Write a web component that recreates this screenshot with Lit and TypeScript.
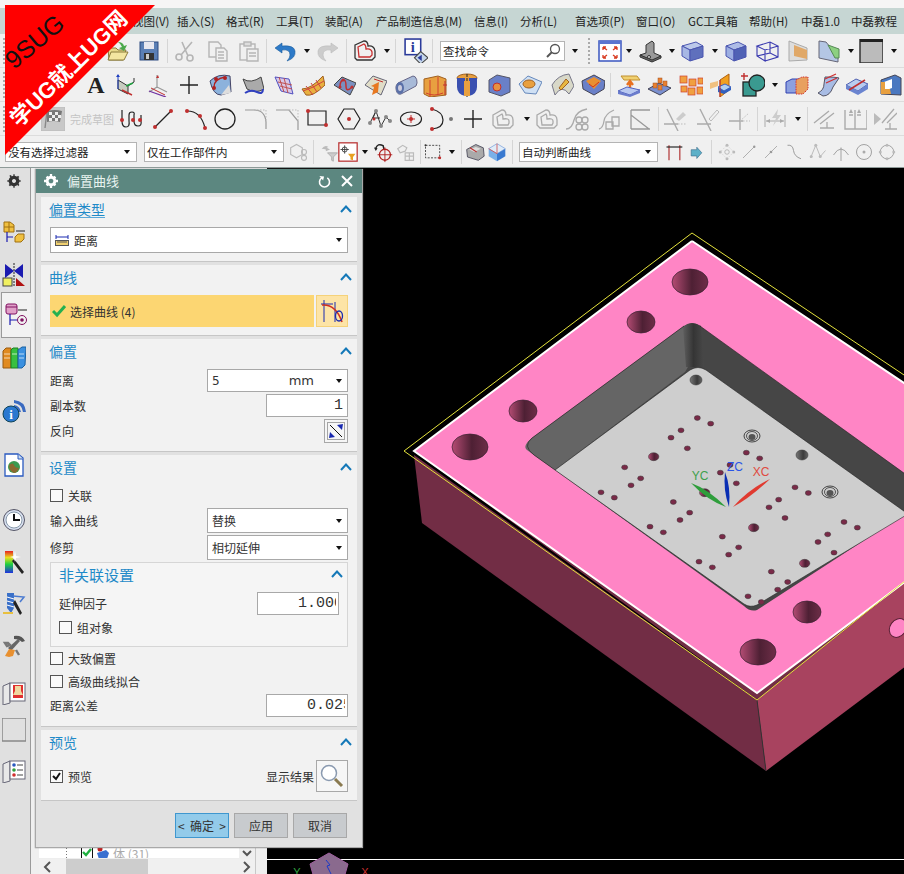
import { LitElement, css, html, svg } from "lit";
import { customElement } from "lit/decorators.js";

// toolbar / side strip icons, all on a 24x24 box
const ICONS: Record<string, unknown> = {
  folder: svg`<path d="M2 9h8l2 2h8l-3 10H3z" fill="#e8d98a" stroke="#8a7a3a"/><path d="M2 21l3-8h17l-4 8z" fill="#f3e6a0" stroke="#8a7a3a"/><path d="M12 3q5 0 6 4l3-1-3 6-5-3 3-1q-1-3-4-5z" fill="#4aa84a"/>`,
  save: svg`<rect x="3" y="3" width="18" height="18" fill="#5b7fb5" stroke="#2c4a80"/><rect x="7" y="3" width="10" height="7" fill="#e8e8f0"/><rect x="7" y="14" width="10" height="7" fill="#333"/><rect x="9" y="15" width="3" height="5" fill="#ccc"/>`,
  cut: svg`<g fill="none" stroke="#b5b5b5" stroke-width="1.6"><circle cx="6" cy="18" r="3"/><circle cx="17" cy="19" r="3"/><path d="M8 16L19 3M15 17L9 3"/></g>`,
  copy: svg`<g fill="#f0f0f0" stroke="#b5b5b5" stroke-width="1.4"><path d="M3 3h9l3 3v12H3z"/><path d="M10 9h8l3 3v10H10z"/><path d="M12 13h6M12 16h6M12 19h6"/></g>`,
  paste: svg`<g fill="#f0f0f0" stroke="#b5b5b5" stroke-width="1.4"><rect x="3" y="5" width="15" height="16"/><rect x="7" y="3" width="7" height="4" fill="#ddd"/><path d="M10 10h11v12H10z"/><path d="M12 14h7M12 17h7"/></g>`,
  undo: svg`<path d="M9 4L2 9l7 5v-3q8-1 8 5 0 3-3 6 9-3 8-10-1-6-13-5z" fill="#2d7ac8" stroke="#1a5a9a" stroke-width=".6"/>`,
  redo: svg`<path d="M15 4l7 5-7 5v-3q-8-1-8 5 0 3 3 6-9-3-8-10 1-6 13-5z" fill="#ccc" stroke="#bbb" stroke-width=".6"/>`,
  heart: svg`<path d="M2 6l9-4q4 0 4 5 6-1 7 5v6l-3 3H4l-2-2z" fill="none" stroke="#333" stroke-width="1.3"/><path d="M5 8l6-3q2 1 2 5 5-1 6 3v3l-2 2H6z" fill="none" stroke="#c83030" stroke-width="1.3"/>`,
  info: svg`<rect x="2" y="1" width="15" height="15" fill="#fff" stroke="#2a3a9a" stroke-width="1.5"/><text x="9.5" y="13" text-anchor="middle" font-family="Liberation Serif" font-weight="700" font-size="14" fill="#2a3a9a">i</text><path d="M17 13l7 6-7 6-6-6z" fill="#c5d6ea" stroke="#444"/><path d="M14 19l4-3v6z" fill="#2a3a9a"/>`,
  fit: svg`<rect x="1" y="2" width="22" height="20" fill="#fff" stroke="#3a55c0" stroke-width="1.5"/><rect x="1" y="2" width="22" height="3" fill="#5a75d0"/><path d="M5 8l4 3M5 8v3M5 8h3M19 8l-4 3M19 8v3M19 8h-3M5 19l4-3M5 19v-3M5 19h3M19 19l-4-3M19 19v-3M19 19h-3" stroke="#d83a20" stroke-width="1.3" fill="none"/>`,
  machine: svg`<path d="M2 16l6-2V6l6-4 2 2v10l7 3-9 5z" fill="#999" stroke="#333"/><path d="M2 16l12 5 9-4v2l-9 4-12-5z" fill="#666" stroke="#333"/><circle cx="11" cy="18" r="1.5" fill="#ddd" stroke="#333"/>`,
  cube: svg`<path d="M2 7l14-4 7 4-13 4z" fill="#bcc9ea" stroke="#4a55b0"/><path d="M2 7l8 4v11l-8-5z" fill="#a7b7e4" stroke="#4a55b0"/><path d="M10 11l13-4v11l-13 4z" fill="#5f70bd" stroke="#4a55b0"/>`,
  cube2: svg`<path d="M2 7l12-4 8 4-12 4z" fill="#aebce6" stroke="#4a55b0"/><path d="M2 7l8 4v11l-8-5z" fill="#9dafe2" stroke="#4a55b0"/><path d="M10 11l12-4v11l-12 4z" fill="#5062b5" stroke="#4a55b0"/>`,
  wire: svg`<g fill="none" stroke="#3a3ab0" stroke-width="1.1"><path d="M2 7l13-4 8 4-13 4zM2 7v10l8 5V11M10 22l13-4V7M15 3v11l8 4M15 14L2 17"/></g>`,
  section: svg`<path d="M4 2l5 2 13 5v12L4 22z" fill="#ddd" stroke="#aaa"/><path d="M9 6l13 5v9L9 17z" fill="#e0a868"/>`,
  section2: svg`<path d="M2 2l7 1 12 15v5L2 19z" fill="#b4c6e4" stroke="#667"/><path d="M11 6l11 4v9l-4 0z" fill="#8cd080" stroke="#585"/>`,
  square: svg`<rect x="1" y="0" width="23" height="24" fill="#bbb" stroke="#333" stroke-width="1.5"/><rect x="1" y="0" width="23" height="3" fill="#222"/>`,
  letterA: svg`<text x="12" y="20" text-anchor="middle" font-family="Liberation Serif" font-weight="700" font-size="24" fill="#222">A</text>`,
  axis: svg`<path d="M5 7l10 6v8L5 16z" fill="#c8ccc0" stroke="#333"/><path d="M15 13l6-4v-4" fill="none" stroke="#333"/><path d="M5 2v14" stroke="#2040c0"/><path d="M3 4l2-3 2 3z" fill="#2040c0"/><path d="M13 13l7-3" stroke="#20a040" stroke-width="1.5"/><path d="M9 17l10 5" stroke="#c03030" stroke-width="1.5"/>`,
  csys: svg`<path d="M11 2v13M11 14l10 5M11 14L3 19" fill="none" stroke="#999" stroke-width="1.2"/><path d="M10 5l2-3 1 3z" fill="#c03030"/><path d="M3 18l17 6" stroke="#7030a0" stroke-width="1.3"/><path d="M5 15l14 7" stroke="#c03030"/>`,
  plus: svg`<path d="M12 3v18M3 12h18" stroke="#222" stroke-width="1.4"/>`,
  surf1: svg`<path d="M2 8q8-8 20-5l1 16-10 3Q5 22 2 8z" fill="#8cb2dc" stroke="#446"/><path d="M6 14q0-8 11-10" fill="none" stroke="#b02020" stroke-width="1.4"/><circle cx="6" cy="15" r="2" fill="#b02020"/><circle cx="17" cy="5" r="2" fill="#b02020"/><circle cx="8" cy="6" r="2" fill="#b02020"/><path d="M13 22l8-10 2 8z" fill="#ddd"/>`,
  surf2: svg`<path d="M3 6q8 5 18-2l3 12q-8 5-17 0z" fill="#aaa" stroke="#444"/><path d="M5 20q6-4 12-1t6-3" stroke="#3040c0" fill="none" stroke-width="2"/>`,
  mesh: svg`<path d="M4 4l14 2 4 15-12-3z" fill="#d8c8e8" stroke="#5050c0"/><path d="M7 9l14 3M9 13l12 3M8 4l5 15M13 5l4 15" stroke="#c05050" fill="none"/>`,
  mesh2: svg`<path d="M1 16Q10 16 22 3l2 9Q12 24 5 22z" fill="#e8b040" stroke="#a06020"/><path d="M5 13l7 9M10 10l6 9M15 7l5 8M2 18Q12 15 23 8" stroke="#d04040" fill="none"/>`,
  patch: svg`<path d="M2 12L10 4l14 6-6 12z" fill="#7a90c0" stroke="#444"/><path d="M8 14q0-6 3-7t3 6 6 1" stroke="#c03030" fill="none" stroke-width="1.5"/><circle cx="8" cy="14" r="1.5" fill="#c03030"/><circle cx="11" cy="7" r="1.5" fill="#c03030"/><circle cx="20" cy="14" r="1.5" fill="#c03030"/>`,
  patch2: svg`<path d="M2 12L10 3l14 5-6 14z" fill="#e0ddc8" stroke="#667"/><path d="M9 22l2-8-3-1 8-4-1 10z" fill="#e87820"/><path d="M11 6l9 3" stroke="#c03030"/>`,
  cylinder: svg`<path d="M4 10l15-7a4 6 0 0 1 3 10L7 21a4 6 0 0 1-3-11z" fill="#a8bad8" stroke="#668"/><ellipse cx="6" cy="15" rx="4" ry="6" fill="#5a70a8"/><ellipse cx="6" cy="15" rx="2" ry="3" fill="#ccd"/>`,
  orange: svg`<path d="M1 6l14-3 8 3v16l-16 2-6-3z" fill="#e8a040" stroke="#a06020"/><path d="M7 7v17M15 4v18M3 20q8 4 17 0" stroke="#d04030" fill="none"/><path d="M22 8v14M20 12h4" stroke="#c03030"/>`,
  hole: svg`<ellipse cx="12" cy="5" rx="10" ry="4" fill="#e8a040" stroke="#a06020"/><path d="M2 5h8v18q-8-2-8-9zM14 23V5h8v9q0 7-8 9z" fill="#3a50b0"/><path d="M12 1v23" stroke="#222" stroke-dasharray="3 1"/><path d="M9 8h6v15H9z" fill="#e8a040"/>`,
  boxhole: svg`<path d="M2 7l8-5 13 3v14l-9 4-12-4z" fill="#6a80c8" stroke="#556"/><circle cx="10" cy="14" r="4" fill="#e89040" stroke="#c03030"/>`,
  pad: svg`<path d="M1 11l9-8 14 6-6 12-11-1z" fill="#cfe0f4" stroke="#6688bb"/><ellipse cx="11" cy="11" rx="6" ry="4" fill="#e8a040" stroke="#a06020"/>`,
  rib: svg`<path d="M2 12Q8 2 19 1l5 12-5 8q-7-10-14 1z" fill="#d8d8c8" stroke="#778"/><path d="M9 15l7-9 3 3-8 8z" fill="#e8b840" stroke="#a06020"/>`,
  tray: svg`<path d="M1 8l12-6 11 6-1 8-10 6-11-6z" fill="#6a80c8" stroke="#445"/><path d="M5 8l8-4 7 4-7 8z" fill="#e89030"/><path d="M8 11l4 3 6-5" stroke="#d03020" fill="none"/>`,
  extrude: svg`<path d="M4 3h16l3 4H7z" fill="#f0d070" stroke="#c09030"/><path d="M13 18V9M10 12l3-4 3 4" stroke="#e87020" stroke-width="2.4" fill="none"/><path d="M1 18l9-4 13 3-10 5z" fill="#b8c8f0" stroke="#5060c0"/><path d="M1 18v3l12 3v-2zM13 24l10-4v-3l-10 5z" fill="#6a7ccc"/>`,
  pins: svg`<path d="M1 16l11-6 12 5-11 7z" fill="#7a90d0" stroke="#445"/><g fill="#e88030" stroke="#a05020" stroke-width=".5"><rect x="6" y="10" width="4" height="5"/><rect x="11" y="5" width="4" height="5"/><rect x="16" y="8" width="4" height="5"/><rect x="11" y="12" width="4" height="5"/></g>`,
  boxes: svg`<g fill="#f0a040" stroke="#d04030" stroke-width=".7"><rect x="1" y="3" width="7" height="7"/><rect x="10" y="6" width="7" height="7"/><rect x="19" y="5" width="5" height="6"/><rect x="2" y="13" width="6" height="6"/><rect x="9" y="15" width="7" height="7"/><rect x="18" y="14" width="6" height="7"/></g>`,
  split: svg`<path d="M12 7L21 1v16l-9 7z" fill="#f0a020" stroke="#b06010"/><path d="M2 10l8-2v5l-8 3z" fill="#f0c080"/><path d="M10 14l7-3 6 3-7 4z" fill="#b0d0f0" stroke="#4060c0"/><path d="M10 14v5l6 2v-3zM16 21l7-4v-3l-7 4z" fill="#3060c0"/><path d="M12 7v17" stroke="#c03030"/>`,
  boolean: svg`<path d="M3 0v7M0 3h7" stroke="#c03030" stroke-width="1.4"/><rect x="2" y="9" width="13" height="14" fill="#3a9a90" stroke="#222" stroke-width="1.3"/><circle cx="16" cy="10" r="8" fill="#3a9a90" stroke="#222" stroke-width="1.3"/>`,
  cubes2: svg`<path d="M1 9l6-3h8v14H1z" fill="#8ca0e0" stroke="#3040b0"/><path d="M11 7l6-3h6v12l-5 5h-7z" fill="#e8a060" stroke="#d03030" stroke-dasharray="1.5 1"/>`,
  trim: svg`<path d="M9 4q11 0 14 1l-6 9q-3 9-10 9l-5-3q6-3 6-9z" fill="#a8bce4" stroke="#556"/><path d="M9 6l11-5M10 10l11-5" stroke="#d03030" stroke-width="1.3"/>`,
  slab: svg`<path d="M1 12l10-6 12 5-10 7z" fill="#b8ccf0" stroke="#5060b0"/><path d="M1 12v4l12 6v-4zM13 22l10-6v-5l-10 7z" fill="#6a84d0"/><path d="M4 17l16-10" stroke="#c03030" stroke-width="1.6"/>`,
  frame: svg`<path d="M3 7l14-5 6 3v17L3 21z" fill="#4a78c0" stroke="#445"/><path d="M6 9l8-3v9l-8 3z" fill="#fff"/><path d="M3 9v12h10l-1-5H7V9z" fill="#e8a040"/>`,
  flag: svg`<rect x="0" y="0" width="24" height="24" fill="#c8c8c8" stroke="#bbb"/><path d="M6 4q8-2 15 0l-2 11q-6-2-13 0z" fill="#777"/><path d="M8 5h3v3H8zM14 5h3v3h-3zM11 8h3v3h-3zM17 8h3v3h-3zM8 11h3v3H8zM14 11h3v3h-3z" fill="#eee"/><path d="M6 4L4 21" stroke="#888" stroke-width="1.4"/>`,
  profile: svg`<path d="M3 3v11q0 6 4 6t3-6V8q0-3 3-3t2 3v6q0 5 4 5t3-5V8" fill="none" stroke="#222" stroke-width="1.2"/><g fill="#c03030"><circle cx="3" cy="13" r="2"/><circle cx="14" cy="13" r="2"/><circle cx="21" cy="13" r="2"/></g>`,
  line: svg`<path d="M4 20L20 4" stroke="#222" stroke-width="1.2"/><g fill="#c03030"><circle cx="4" cy="20" r="2"/><circle cx="20" cy="4" r="2"/></g>`,
  arc: svg`<path d="M4 4q14 0 18 17" fill="none" stroke="#222" stroke-width="1.2"/><g fill="#c03030"><circle cx="4" cy="4" r="2"/><circle cx="17" cy="9" r="2"/><circle cx="22" cy="21" r="2"/></g>`,
  circle: svg`<circle cx="12" cy="12" r="10" fill="none" stroke="#222" stroke-width="1.3"/>`,
  fillet: svg`<path d="M1 3h9q11 0 12 12v7" fill="none" stroke="#999" stroke-width="1.2"/><path d="M10 3h12v12" fill="none" stroke="#bbb" stroke-dasharray="1.5 1.5"/>`,
  chamfer: svg`<path d="M1 3h13l9 11v9" fill="none" stroke="#999" stroke-width="1.2"/><path d="M14 3h9v11" fill="none" stroke="#bbb" stroke-dasharray="1.5 1.5"/>`,
  rect: svg`<path d="M2 4h18v14H2z" fill="none" stroke="#222" stroke-width="1.2"/><g fill="#c03030"><circle cx="2" cy="4" r="2"/><circle cx="20" cy="18" r="2"/></g>`,
  polygon: svg`<path d="M7 2h10l6 10-6 10H7L1 12z" fill="none" stroke="#222" stroke-width="1.2"/><circle cx="12" cy="12" r="2" fill="#c03030"/>`,
  spline: svg`<path d="M2 16L8 4l5 15 5-9 4 4" fill="none" stroke="#333" stroke-width="1"/><path d="M8 4l-3 7h7" fill="none" stroke="#333"/><g fill="#888"><circle cx="2" cy="16" r="2"/><circle cx="8" cy="4" r="2"/><circle cx="13" cy="19" r="2"/><circle cx="18" cy="10" r="2"/><circle cx="22" cy="14" r="2"/></g><circle cx="6" cy="12" r="1.5" fill="#c03030"/>`,
  ellipse: svg`<ellipse cx="12" cy="12" rx="10.5" ry="7" fill="none" stroke="#222" stroke-width="1.2"/><path d="M12 8v8M8 12h8" stroke="#c03030"/><circle cx="12" cy="12" r="2" fill="#c03030"/>`,
  conic: svg`<path d="M3 2q11 3 11 11T3 22" fill="none" stroke="#222" stroke-width="1.2"/><g><circle cx="3" cy="2" r="2" fill="#c03030"/><circle cx="3" cy="22" r="2" fill="#c03030"/><circle cx="22" cy="12" r="2" fill="#777"/></g>`,
  offset: svg`<g fill="none" stroke="#aaa" stroke-width="1.3"><path d="M2 8l9-5q4 0 4 5 7-1 7 5v5l-3 3H5l-3-3z"/><path d="M6 10l5-3q1 1 1 5 6-1 6 2v2l-1 2H7z"/></g>`,
  curveset: svg`<g fill="none" stroke="#aaa" stroke-width="1.3"><path d="M1 22q6 0 8-9t13-11"/><circle cx="14" cy="13" r="3"/><circle cx="20" cy="13" r="3"/><circle cx="14" cy="20" r="3"/><circle cx="20" cy="20" r="3"/></g>`,
  mirror: svg`<g fill="none" stroke="#aaa" stroke-width="1.3"><path d="M1 22q4-1 5-8t10-11"/><path d="M8 15h7v7H8zM14 10h7v9h-7z"/></g>`,
  trimc: svg`<g fill="none" stroke="#999" stroke-width="1.3"><path d="M3 3h19M3 22h19M3 3v19M3 8l18 14"/></g>`,
  ex1: svg`<path d="M4 2l11 22M1 17h14" stroke="#aaa" stroke-width="1.4" fill="none"/><path d="M15 17h8" stroke="#bbb" stroke-dasharray="1.5 1.5"/><path d="M13 12l7-7 3 3-7 6z" fill="#ccc"/>`,
  ex2: svg`<path d="M4 2l11 22M1 17h14" stroke="#aaa" stroke-width="1.4" fill="none"/><path d="M13 12l8-9 2 2-8 9z" fill="none" stroke="#bbb"/>`,
  ex3: svg`<path d="M2 14h14M13 23V2" stroke="#aaa" stroke-width="1.4" fill="none"/><path d="M13 14l9-8M13 14h10" stroke="#bbb" stroke-dasharray="1.5 1.5"/>`,
  dim: svg`<path d="M2 8v12M22 8v12M3 14h18" stroke="#aaa" fill="none"/><path d="M3 14l4-2v4zM21 14l-4-2v4z" fill="#aaa"/><path d="M15 2l-6 9h4l-3 8 8-11h-4z" fill="#ccc"/>`,
  cons1: svg`<path d="M2 16L17 4M8 17L22 6M8 21h14M15 15v6" stroke="#aaa" stroke-width="1.3" fill="none"/>`,
  cons2: svg`<path d="M2 3v19h22V3M12 3v19M6 8h4M14 8h4" stroke="#aaa" stroke-width="1.4" fill="none"/><path d="M8 2l2 4H6zM16 2l2 4h-4z" fill="#aaa"/>`,
  cons3: svg`<path d="M1 6l7 6-7 6z" fill="#bbb"/><path d="M9 16L21 2M14 16L24 6M12 22h12M17 16v6" stroke="#aaa" stroke-width="1.3" fill="none"/>`,
  lock: svg`<g fill="none" stroke="#bbb" stroke-width="1.4"><path d="M2 7l7-4 7 4v8l-7 4-7-4z"/><circle cx="18" cy="12" r="3"/><circle cx="18" cy="19" r="3"/></g>`,
  funnel: svg`<path d="M2 8q4-5 8-2l-2 1 4 2-5 2v-2Q5 8 2 8z" fill="#bbb"/><path d="M9 13h12l-5 5v5l-2-1v-4z" fill="#ccc" stroke="#aaa"/>`,
  filterbox: svg`<rect x="1" y="1" width="22" height="22" fill="#fff" stroke="#b83030" stroke-width="1.5"/><circle cx="8" cy="9" r="3" fill="none" stroke="#333"/><path d="M8 4v10M3 9h10" stroke="#333"/><path d="M12 14h9l-3 4v4l-3-1v-3z" fill="#e8a020"/>`,
  target: svg`<path d="M3 8q2-6 8-3l1 4" fill="none" stroke="#222" stroke-width="1.6"/><path d="M1 7l4 1-2 3z" fill="#222"/><circle cx="13" cy="15" r="6" fill="none" stroke="#b02020" stroke-width="1.4"/><path d="M13 7v16M5 15h16" stroke="#b02020"/>`,
  gears: svg`<g fill="none" stroke="#bbb" stroke-width="1.4"><path d="M2 8l6-4 5 3-2 4-6 2z"/><path d="M11 13h10v9H11zM16 13v9M11 17h10"/></g>`,
  dashrect: svg`<rect x="3" y="4" width="17" height="15" fill="none" stroke="#333" stroke-dasharray="2.4 1.6"/><circle cx="20" cy="19" r="1.8" fill="#c03030"/><circle cx="3" cy="4" r="1.2" fill="#333"/>`,
  cam: svg`<path d="M2 9l11-6 9 4 1 10-7 5-13-4z" fill="#aaa" stroke="#445"/><path d="M5 9l8-3 6 2-8 4z" fill="#ddd"/><path d="M6 7l8 5" stroke="#c03030" stroke-width="1.3"/>`,
  cube3: svg`<path d="M2 8l10-6 10 6-10 6z" fill="#e0ecf8" stroke="#88aadd"/><path d="M2 8l10 6v9L2 17z" fill="#7ab0e8"/><path d="M12 14l10-6v9l-10 6z" fill="#3a7ad0"/><path d="M12 2v12M2 8l10 6" stroke="#d05050"/>`,
  hbar: svg`<path d="M6 4v18M19 4v18" stroke="#b03030" stroke-width="1.4"/><path d="M3 6h19" stroke="#222" stroke-width="1.4"/>`,
  arrow: svg`<path d="M4 7h9V3l8 9-8 9v-4H4z" transform="translate(2 4) scale(.75)" fill="#5cb0c8" stroke="#3a6a8a"/>`,
  snap1: svg`<path d="M12 3l9 9-9 9-9-9z" fill="none" stroke="#ccc" stroke-dasharray="2 2"/><g fill="#bbb"><circle cx="12" cy="3" r="2"/><circle cx="21" cy="12" r="2"/><circle cx="3" cy="12" r="2"/><circle cx="12" cy="21" r="2"/></g><circle cx="12" cy="12" r="3" fill="none" stroke="#aaa"/>`,
  snap2: svg`<path d="M4 20L20 4" stroke="#999"/><circle cx="19" cy="5" r="1.6" fill="#999"/>`,
  snap3: svg`<path d="M4 20L20 4" stroke="#999"/><circle cx="12" cy="12" r="1.8" fill="#999"/>`,
  snap4: svg`<path d="M2 3q7-1 8 7t10 11" fill="none" stroke="#999" stroke-width="1.3"/>`,
  snap5: svg`<path d="M2 20L9 3l6 15 7-8" fill="none" stroke="#aaa"/><g fill="#bbb"><circle cx="9" cy="3" r="2"/><circle cx="15" cy="18" r="2"/><circle cx="3" cy="18" r="2"/></g>`,
  snap6: svg`<path d="M12 6v18M2 16q10-16 20 0" fill="none" stroke="#999" stroke-width="1.2"/>`,
  snap7: svg`<circle cx="12" cy="12" r="10" fill="none" stroke="#999" stroke-width="1.2"/><circle cx="12" cy="12" r="2" fill="#aaa"/>`,
  snap8: svg`<circle cx="12" cy="12" r="9" fill="none" stroke="#999" stroke-width="1.2"/><g fill="#bbb"><circle cx="12" cy="3" r="2"/><circle cx="21" cy="12" r="2"/><circle cx="3" cy="12" r="2"/><circle cx="12" cy="21" r="2"/></g>`,
  // side strip
  gear: svg`<path d="M12 4a8 8 0 1 0 .01 0zm0 5a3 3 0 1 1-.01 0z" fill="#333" fill-rule="evenodd"/><path d="M11 2h2v3h-2zM11 19h2v3h-2zM2 11h3v2H2zM19 11h3v2h-3zM5 4l2-1 2 2-2 2zM17 17l2-1 1 2-2 2zM4 18l2-2 2 2-2 2zM16 6l2-2 2 2-2 2z" fill="#333"/>`,
  asm: svg`<path d="M2 2h6l4 3v7H2z" fill="#f0c040" stroke="#a07010"/><path d="M2 7h10M7 2v10" stroke="#a07010"/><path d="M5 12v10M5 17h6" stroke="#1a1ab0" stroke-width="1.2"/><path d="M13 17l3-3h6v5l-3 3h-6z" fill="#f0c040" stroke="#a07010"/><path d="M14 11h9" stroke="#222"/>`,
  mates: svg`<path d="M3 1l9 7-9 7zM21 1l-9 7 9 7z" fill="#1a1ab0"/><path d="M12 0v24" stroke="#222" stroke-dasharray="2 1"/><rect x="1" y="15" width="9" height="8" fill="#f0f060" stroke="#444"/><path d="M14 15l9 8h-9z" fill="#b01010"/>`,
  part: svg`<rect x="2" y="1" width="11" height="10" rx="2" fill="#e0a0c8" stroke="#801060"/><path d="M2 4h11" stroke="#801060"/><path d="M6 11v11M6 17h7" stroke="#1a1ab0" stroke-width="1.2"/><circle cx="18" cy="17" r="4.5" fill="none" stroke="#801060"/><circle cx="18" cy="17" r="1.8" fill="#801060"/><path d="M14 7h9" stroke="#222"/>`,
  books: svg`<path d="M1 5l3-3h5v20H1z" fill="#e08a20" stroke="#985a10"/><path d="M9 4l2-2h5v20H9z" fill="#38c040" stroke="#1a8020"/><path d="M16 4l4-3h4l-1 18-3 3h-4z" fill="#3a90e0" stroke="#1a60a0"/><path d="M2 8h6M2 12h6M10 8h5M17 8h5M17 12h5" stroke="#ffffffaa"/>`,
  wifi: svg`<path d="M12 1q11 1 12 12h-3Q20 5 12 4zM12 6q6 1 7 7h-3q-1-4-4-4z" fill="#3a6ac0"/><circle cx="9" cy="15" r="8" fill="#2a78d0" stroke="#145"/><text x="9" y="20" text-anchor="middle" font-family="Liberation Serif" font-weight="700" font-size="13" fill="#fff">i</text>`,
  globe: svg`<path d="M3 1h13l5 4v18H3z" fill="#fff" stroke="#2a5ac0" stroke-width="1.3"/><path d="M16 1v5h5" fill="#cde" stroke="#2a5ac0"/><circle cx="12" cy="14" r="6" fill="#3a9a50"/><path d="M7 12q4-3 5 0t5 3q-2 5-5 5-5-2-5-8z" fill="#8a6a30"/>`,
  clock: svg`<circle cx="12" cy="12" r="10.5" fill="#d8e0f0" stroke="#556"/><circle cx="12" cy="12" r="8" fill="#fff" stroke="#89a"/><path d="M12 6v6h6" stroke="#111" stroke-width="2" fill="none"/>`,
  wand: svg`<defs><linearGradient id="rb" x1="0" y1="0" x2="0" y2="1"><stop offset="0" stop-color="#e82020"/><stop offset=".3" stop-color="#e8e020"/><stop offset=".6" stop-color="#20d040"/><stop offset="1" stop-color="#2030e0"/></linearGradient></defs><rect x="3" y="1" width="8" height="22" fill="url(#rb)"/><path d="M12 9l10 13-2 2L10 11z" fill="#222"/><path d="M13 1l1 5 5 1-5 1-1 4-1-4-4-1 4-1z" fill="#fff"/>`,
  drill: svg`<path d="M5 1h7v15l-3 5-4-5z" fill="#3a70c8"/><path d="M5 5l7 2M5 9l7 2M5 13l7 2" stroke="#fff"/><path d="M11 4l11 1-4 5" fill="none" stroke="#4a7ad0" stroke-width="1.5"/><path d="M13 8l7 13-2 2-7-12z" fill="#222"/><path d="M1 21h10" stroke="#e8c040" stroke-width="2"/>`,
  tools: svg`<path d="M6 14L16 5l2 2-9 10z" fill="#666"/><path d="M12 2q8-1 11 5l-3 1q-3-3-8-3z" fill="#555"/><path d="M3 22l4-7 6 1-2 6-4 1z" fill="#e89030"/><path d="M5 12l-2-3 3 0 2 2zM14 16l3 5" stroke="#777" stroke-width="2.4" fill="none"/>`,
  bookred: svg`<path d="M1 5l7-3v20l-7 2z" fill="#e8e8e8" stroke="#667"/><rect x="8" y="2" width="15" height="18" fill="#fff" stroke="#667"/><rect x="11" y="4" width="10" height="13" fill="#e03030"/><path d="M13 5h6v5l2 4H11l2-4z" fill="#f0d8a0"/>`,
  bookblank: svg`<rect x="0" y="0" width="24" height="23" fill="#e0e0e0" stroke="#888" stroke-width="1.5"/>`,
  booklist: svg`<path d="M1 5l7-3v20l-7 2z" fill="#e8e8e8" stroke="#667"/><rect x="8" y="2" width="15" height="18" fill="#fff" stroke="#667"/><circle cx="12" cy="6" r="1.8" fill="#2a5ac0"/><circle cx="12" cy="11" r="1.8" fill="#30a040"/><circle cx="12" cy="16" r="1.8" fill="#d03030"/><path d="M15 6h6M15 11h6M15 16h6" stroke="#444"/>`,
};

type Item = { l: number; w: number; t: unknown };

const icon = (name: string, size = 24) =>
  html`<svg class="ic" width=${size} height=${size} viewBox="0 0 24 24">${ICONS[name]}</svg>`;
const I = (cx: number, name: string, size = 24): Item => ({ l: cx - size / 2, w: size, t: icon(name, size) });
const C = (cx: number): Item => ({ l: cx - 3.5, w: 7, t: html`<i class="caret"></i>` });
const S = (x: number): Item => ({ l: x, w: 1, t: html`<i class="sep"></i>` });
const G = (x: number): Item => ({ l: x, w: 3, t: html`<i class="grip"></i>` });
const B = (l: number, r: number, label: string): Item => ({
  l,
  w: r - l,
  t: html`<div class="combo"><span>${label}</span><i class="caret"></i></div>`,
});

const ROWS: Item[][] = [
  [G(2), I(118, "folder"), I(149, "save"), S(167), I(185, "cut"), I(218, "copy"), I(249, "paste"), S(266), I(285, "undo"), C(307), I(328, "redo"), S(346), I(365, "heart"), C(387), S(395), I(415, "info", 25), S(432),
    { l: 440, w: 125, t: html`<div class="find"><span>查找命令</span><svg width="16" height="16" viewBox="0 0 16 16"><circle cx="10" cy="6" r="4.5" fill="#fff" stroke="#555" stroke-width="1.3"/><path d="M7 9l-5 5" stroke="#555" stroke-width="2"/></svg></div>` },
    C(575), G(587), I(610, "fit"), C(629), I(650, "machine"), C(672), I(692, "cube"), C(715), I(736, "cube2"), I(767, "wire"), I(797, "section"), I(829, "section2"), C(851), I(871, "square"), C(894)],
  [G(2), I(96, "letterA"), I(125, "axis"), I(158, "csys"), I(189, "plus"), I(220, "surf1"), I(252, "surf2"), I(283, "mesh"), I(313, "mesh2"), I(344, "patch"), I(375, "patch2"), I(406, "cylinder"), I(435, "orange"), I(467, "hole"), I(499, "boxhole"), I(530, "pad"), I(562, "rib"), I(593, "tray"), S(610), I(629, "extrude"), I(659, "pins"), I(691, "boxes"), I(720, "split"), I(753, "boolean"), C(775), I(797, "cubes2"), I(828, "trim"), I(857, "slab"), I(890, "frame")],
  [G(2), I(53, "flag"),
    { l: 69, w: 46, t: html`<span class="ghost">完成草图</span>` },
    I(131, "profile"), I(163, "line"), I(195, "arc"), I(225, "circle"), I(256, "fillet"), I(287, "chamfer"), I(318, "rect"), I(349, "polygon"), I(380, "spline"), I(411, "ellipse"), I(441, "conic"), I(473, "plus"), I(503, "offset"), C(527), I(547, "offset"), I(577, "curveset"), I(610, "mirror"), I(640, "trimc"), S(658), I(675, "ex1"), I(708, "ex2"), I(739, "ex3"), S(757), I(775, "dim"), C(798), S(807), I(824, "cons1"), I(855, "cons2"), I(885, "cons3")],
  [B(5, 137, "没有选择过滤器"), B(144, 284, "仅在工作部件内"), I(299, "lock", 20), S(313), I(330, "funnel", 20), I(348, "filterbox", 20), C(365), I(384, "target", 22), I(406, "gears", 20), S(420), I(433, "dashrect", 20), C(452), S(461), I(475, "cam", 20), I(497, "cube3", 20), S(512), B(519, 658, "自动判断曲线"), I(674, "hbar", 20), I(697, "arrow", 20), S(711), I(727, "snap1", 18), I(749, "snap2", 18), I(771, "snap3", 18), I(795, "snap4", 18), I(818, "snap5", 18), I(841, "snap6", 18), I(864, "snap7", 18), I(887, "snap8", 18)],
];

const MENU = [
  { x: 132, t: "视图(V)" }, { x: 177, t: "插入(S)" }, { x: 226, t: "格式(R)" }, { x: 276, t: "工具(T)" }, { x: 325, t: "装配(A)" },
  { x: 376, t: "产品制造信息(M)" }, { x: 474, t: "信息(I)" }, { x: 520, t: "分析(L)" }, { x: 575, t: "首选项(P)" }, { x: 636, t: "窗口(O)" },
  { x: 688, t: "GC工具箱" }, { x: 749, t: "帮助(H)" }, { x: 801, t: "中磊1.0" }, { x: 851, t: "中磊教程" },
];

// vertical centre of each strip icon in the page
const SIDE: { name: string; cy: number; size?: number }[] = [
  { name: "gear", cy: 181, size: 16 }, { name: "asm", cy: 232 }, { name: "mates", cy: 275 }, { name: "part", cy: 315 }, { name: "books", cy: 358 },
  { name: "wifi", cy: 411 }, { name: "globe", cy: 465 }, { name: "clock", cy: 520 }, { name: "wand", cy: 562 }, { name: "drill", cy: 604 },
  { name: "tools", cy: 646 }, { name: "bookred", cy: 693 }, { name: "bookblank", cy: 730 }, { name: "booklist", cy: 771 },
];

// pocket floor holes, reference crop coordinates (x-520)*3, (y-310)*3
const SMALL = [[532,324],[572,341],[483,361],[453,383],[502,415],[314,472],[362,505],[333,526],[243,547],[283,563],[460,576],[509,608],[480,630],[390,650],[430,667],[607,680],[656,712],[626,734],[537,755],[577,772],[754,785],[803,816],[773,839],[684,859],[724,876],[679,428],[719,445],[630,465],[601,488],[649,520],[825,532],[865,549],[776,569],[747,592],[795,624],[972,636],[1012,653],[923,673],[894,696],[942,728]];
const MID = [[401,440],[554,548],[701,653],[854,760]];
const BIG = [[690,282,18,13],[641,322,14,11],[523,411,14,11],[470,447,18,13],[758,652,18,13],[807,612,14,11]];

const crop = (v: number, o: number) => o + v / 3;

@customElement("app-root")
export class AppRoot extends LitElement {
  static styles = css`
    :host { display: block; width: 904px; height: 874px; overflow: hidden; position: relative; background: #f0f0f0; font: 12px "Noto Sans CJK SC", "Liberation Sans", sans-serif; color: #333; }
    * { box-sizing: border-box; }
    .title { height: 8px; background: #f5f5f5; }
    .menu { height: 26px; background: #c6d6d3; display: flex; align-items: center; font-size: 11.5px; color: #222; white-space: nowrap; }
    .menu span { flex: none; }
    .row { height: 34px; display: flex; align-items: center; background: #f0f0f0; border-bottom: 1px solid #dcdcdc; }
    .row.last { height: 32px; border-bottom: 1px solid #8e9a98; }
    .slot { flex: none; display: flex; align-items: center; justify-content: center; }
    .ic { display: block; flex: none; }
    .caret { display: block; flex: none; width: 0; height: 0; border: 3.5px solid transparent; border-top: 4px solid #111; border-bottom: 0; }
    .sep { display: block; width: 1px; height: 24px; background: #d5d5d5; }
    .grip { display: block; width: 2px; height: 26px; background: repeating-linear-gradient(#aaa 0 2px, transparent 2px 4px); }
    .ghost { color: #c4c4c4; font-size: 11px; white-space: nowrap; }
    .find, .combo { width: 100%; display: flex; align-items: center; justify-content: space-between; background: #fff; border: 1px solid #b4b4b4; }
    .find { height: 20px; padding: 0 3px 0 2px; font-size: 11.5px; color: #222; }
    .combo { height: 20px; padding: 0 6px 0 2px; font-size: 11.5px; color: #222; white-space: nowrap; }

    .work { height: 706px; display: flex; }
    .strip { width: 31px; flex: none; background: #e0e0e0; border-right: 1px solid #9a9a9a; display: flex; flex-direction: column; position: relative; }
    .tab { display: flex; align-items: center; justify-content: center; padding-right: 2px; flex: none; height: 24px; }
    .tab.active { background: #f2f2f2; border: 1px solid #9a9a9a; border-right: 0; margin-right: -1px; margin-left: 1px; height: 46px; position: relative; }
    .tree { width: 236px; flex: none; background: #efefef; display: flex; flex-direction: column; justify-content: flex-end; }
    .nav { height: 26px; display: flex; flex-direction: column; width: 225px; border-right: 1px solid #c8c8c8; }
    .treerow { height: 11px; display: flex; }
    .node { height: 11px; background: #fff; margin-left: 8px; display: flex; align-items: center; overflow: hidden; padding-left: 37px; gap: 3px; color: #aaa; font-size: 12px; width: 201px; border-bottom: 1px solid #eee; }
    .dots { width: 1px; height: 11px; margin-right: 11px; flex: none; background: repeating-linear-gradient(#777 0 1px, transparent 1px 3px); margin-left: -10px; }
    .chev { width: 16px; display: flex; justify-content: center; align-items: center; }
    .hbar { flex: 1; background: #f0f0f0; margin-left: 8px; display: flex; align-items: center; justify-content: space-between; padding: 0 4px; }
    .hbar b { display: block; width: 82px; height: 15px; background: #cdcdcd; margin-right: 87px; margin-left: 6px; }
    .viewport { flex: 1; background: #000; display: block; }

    .dialog { position: absolute; left: 35px; top: 169px; width: 328px; height: 679px; background: #e1e1e1; border: 1px solid #a8a8a8; border-top: 0; display: flex; flex-direction: column; box-shadow: 0 0 1px #777; }
    .head { height: 24px; flex: none; background: #5c8780; color: #e8f4f0; display: flex; align-items: center; padding: 0 8px 0 8px; font-size: 13px; gap: 9px; }
    .head .name { flex: 1; margin-top: -1px; }
    .body { padding: 4px 5px 0; display: flex; flex-direction: column; gap: 3px; }
    .sec { background: #f2f2f2; border-bottom: 1px solid #c6c6c6; padding: 0 9px 8px; }
    .sec.tail { padding-bottom: 9px; }
    .sec-head { height: 26px; display: flex; align-items: center; justify-content: space-between; color: #1f8ac8; font-size: 14px; margin: 0 -5px 4px -1px; padding-bottom: 2px; }
    .sec-head.first span { border-bottom: 1px solid #5aa8d8; line-height: 16px; }
    .field { height: 26px; background: #fff; border: 1px solid #a8a8a8; display: flex; align-items: center; padding: 0 5px 0 4px; gap: 5px; }
    .field .v { flex: 1; }
    .line { display: flex; align-items: center; justify-content: space-between; height: 23px; margin-bottom: 2px; }
    .line.sel { height: 25px; }
    .line:last-child { margin-bottom: 0; }
    .w141 { width: 141px; height: 100%; }
    .num { width: 82px; height: 23px; background: #fff; border: 1px solid #a8a8a8; display: flex; align-items: center; font: 15px "Liberation Mono", monospace; color: #333; padding: 0 2px 0 40px; }
    .num span { display: block; overflow: hidden; white-space: nowrap; width: 100%; }
    .num.right { justify-content: flex-end; padding: 0 4px 0 0; }
    .unit { font: 13px "DejaVu Sans", sans-serif; color: #333; margin-right: 17px; }
    .pick { display: flex; height: 32px; gap: 2px; }
    .pick .bar { flex: 1; background: #fcd672; display: flex; align-items: center; padding-left: 2px; gap: 4px; }
    .pick .btn { width: 32px; background: #fde4a6; border: 1px solid #f5d27a; display: flex; align-items: center; justify-content: center; }
    .tiny { width: 24px; height: 24px; border: 1px solid #a8a8a8; background: #f6f6f6; display: flex; align-items: center; justify-content: center; }
    .check { display: flex; align-items: center; gap: 5px; height: 21px; }
    .box { width: 13px; height: 13px; border: 1px solid #555; background: #fafafa; display: block; flex: none; }
    .group { border: 1px solid #d6d6d6; background: #f5f5f5; height: 85px; padding: 0 8px; margin-bottom: 1px; }
    .group .sec-head { height: 22px; margin: 0 -5px 7px 0; font-size: 15px; padding: 0; }
    .group .line { margin-bottom: 2px; }
    .res { display: flex; align-items: center; gap: 2px; }
    .lens { width: 32px; height: 32px; border: 1px solid #a8a8a8; background: #f6f6f6; display: flex; align-items: center; justify-content: center; }
    .foot { display: flex; justify-content: flex-end; gap: 5px; padding: 12px 15px 0 0; }
    .foot div { width: 54px; height: 25px; display: flex; align-items: center; justify-content: center; background: #c8cbce; border: 1px solid #a8a8a8; font-size: 12px; }
    .foot .ok { background: #93cbea; border-color: #3f97cf; white-space: pre; font-size: 12px; }
    .banner { position: absolute; left: 0; top: 0; pointer-events: none; }
  `;

  private renderRow(items: Item[], cls: string) {
    let right = 0;
    return html`<div class="row ${cls}">
      ${items.map((it) => {
        const gap = it.l - right;
        right = it.l + it.w;
        return html`<div class="slot" style="width:${it.w}px;margin-left:${gap}px">${it.t}</div>`;
      })}
    </div>`;
  }

  private renderMenu() {
    return html`<div class="menu">
      ${MENU.map((m, i) => {
        const next = MENU[i + 1];
        const w = next ? next.x - m.x : 904 - m.x;
        const ml = i === 0 ? m.x : 0;
        return html`<span style="width:${w}px;margin-left:${ml}px">${m.t}</span>`;
      })}
    </div>`;
  }

  private renderStrip() {
    let bottom = 168;
    return html`<div class="strip">
      ${SIDE.map((s) => {
        const active = s.name === "part";
        const h = active ? 46 : 24;
        const top = s.cy - h / 2;
        const gap = top - bottom;
        bottom = top + h;
        return html`<div class="tab ${active ? "active" : ""}" style="margin-top:${gap}px">${icon(s.name, s.size ?? 24)}</div>`;
      })}
    </div>`;
  }

  private chev() {
    return html`<svg width="14" height="10" viewBox="0 0 14 10"><path d="M2 8l5-5.5L12 8" fill="none" stroke="#1478b8" stroke-width="2"/></svg>`;
  }

  private secHead(t: string, first = false) {
    return html`<div class="sec-head ${first ? "first" : ""}"><span>${t}</span>${this.chev()}</div>`;
  }

  private renderViewport() {
    const holeFill = "url(#holeg)";
    return html`<svg class="viewport" width="637" height="706" viewBox="267 168 637 706">
      <defs>
        <linearGradient id="holeg" x1="0" y1="0" x2="1" y2="0">
          <stop offset="0" stop-color="#b54c74"/><stop offset=".55" stop-color="#4e2034"/><stop offset="1" stop-color="#6e2e48"/>
        </linearGradient>
        <linearGradient id="grayg" x1="0" y1="0" x2="1" y2="0">
          <stop offset="0" stop-color="#777"/><stop offset=".6" stop-color="#3a3a3a"/><stop offset="1" stop-color="#666"/>
        </linearGradient>
        <linearGradient id="cornerg" x1="0" y1="0" x2="1" y2="0">
          <stop offset="0" stop-color="#5e5e5e"/><stop offset=".5" stop-color="#353535"/><stop offset="1" stop-color="#484848"/>
        </linearGradient>
      </defs>
      <path d="M414 455L422 523 766 771 757 700z" fill="#722d45"/>
      <path d="M757 700L766 771 910 663V560z" fill="#a8435f"/>
      <path d="M757 700L766 771" stroke="#333"/>
      <path d="M414 451L757 700 910 578z" fill="#722d45"/>
      <ellipse cx="898" cy="628" rx="8" ry="10" transform="rotate(35 898 628)" fill="#ff85c5" stroke="#5a2035"/>
      <path d="M692 241L414 451 757 693 910 578V387z" fill="#ff85c5"/>
      <path d="M692 241L414 451 757 693 910 578M692 241L910 387" fill="none" stroke="#fff" stroke-width="2"/>
      <path d="M692 233L404 451 757 700 910 577M692 233L910 379" fill="none" stroke="#e4e23c" stroke-width="1"/>
      ${BIG.map(([x, y, rx, ry]) => svg`<ellipse cx=${x} cy=${y} rx=${rx} ry=${ry} fill=${holeFill} stroke="#3a2030" stroke-width=".7"/>`)}
      <path d="M684 326Q692 320 700 326L908 476V512L757 610Q750 612 744 606L555 470 534 455Q522 446 532 438z" fill="#464646"/>
      <path d="M684 326L532 438Q522 446 527 450L555 470 685 372 688 367z" fill="#656565"/>
      <path d="M683 327Q692 320 701 326L704 367H686z" fill="url(#cornerg)"/>
      <path d="M555 470L690 370Q698 365 706 370L908 514 757 605Q750 608 744 604z" fill="#cecece" stroke="#222" stroke-width=".6"/>
      <path d="M684 326L532 438Q522 446 534 455L555 470" fill="none" stroke="#222" stroke-width=".6"/>
      <path d="M700 326L908 476" fill="none" stroke="#222" stroke-width=".6"/>
      ${SMALL.map(([x, y]) => svg`<ellipse cx=${crop(x, 520)} cy=${crop(y, 310)} rx="3" ry="2.4" fill="#7a2a48" stroke="#3a3a3a" stroke-width=".5"/>`)}
      ${MID.map(([x, y]) => svg`<ellipse cx=${crop(x, 520)} cy=${crop(y, 310)} rx="5.2" ry="4" fill=${holeFill} stroke="#3a3a3a" stroke-width=".5"/>`)}
      <ellipse cx="696" cy="380" rx="6" ry="5" fill="url(#grayg)" stroke="#333" stroke-width=".5"/>
      <ellipse cx="802" cy="455" rx="6" ry="5" fill="url(#grayg)" stroke="#333" stroke-width=".5"/>
      ${[[752, 436], [830, 492]].map(([x, y]) => svg`<ellipse cx=${x} cy=${y} rx="8" ry="6" fill="none" stroke="#222" stroke-width=".8"/><ellipse cx=${x} cy=${y} rx="5.5" ry="4.5" fill="none" stroke="#333" stroke-width=".8"/><ellipse cx=${x} cy=${y + 1} rx="3.5" ry="3" fill="#555"/>`)}
      <path d="M691 483Q708 489 726 507 707 500 691 483z" fill="#2f9e3c"/>
      <path d="M725 472Q731 487 729 507 723 490 725 472z" fill="#0a2fb4"/>
      <path d="M770 479Q750 498 733 507 749 489 770 479z" fill="#e03a30"/>
      <text x="700" y="480" text-anchor="middle" font-family="Liberation Sans" font-size="12" fill="#3fa04c">YC</text>
      <text x="735" y="471" text-anchor="middle" font-family="Liberation Sans" font-size="12" fill="#2a55e8">ZC</text>
      <text x="761" y="476" text-anchor="middle" font-family="Liberation Sans" font-size="12" fill="#e04a40">XC</text>
      <path d="M267 859.5H904" stroke="#fff"/>
      <path d="M329 853l19 11-4 14h-30l-4-14z" fill="#8a6a8e" stroke="#a060a0"/>
      <path d="M326 860l4 5-3 1 4 8" fill="none" stroke="#1a3ac8"/>
      <text x="297" y="876" text-anchor="middle" font-family="Liberation Sans" font-size="11" fill="#30a040">Y</text>
      <text x="365" y="876" text-anchor="middle" font-family="Liberation Sans" font-size="11" fill="#d03030">X</text>
    </svg>`;
  }

  private renderDialog() {
    const check = (label: string, on = false) => html`<div class="check">
      ${on
        ? html`<svg width="13" height="13" viewBox="0 0 13 13" class="ic"><rect x=".5" y=".5" width="12" height="12" fill="#fafafa" stroke="#555"/><path d="M3 6l3 3 4-6" fill="none" stroke="#111" stroke-width="2"/></svg>`
        : html`<i class="box"></i>`}
      <span>${label}</span>
    </div>`;
    const sel = (v: string) => html`<div class="field w141"><span class="v">${v}</span><i class="caret"></i></div>`;
    return html`<div class="dialog">
      <div class="head">
        <svg width="14" height="14" viewBox="0 0 24 24"><g fill="#fff"><path d="M12 3a9 9 0 1 0 .01 0zm0 5a4 4 0 1 1-.01 0z" fill-rule="evenodd"/><path d="M10 0h4v4h-4zM10 20h4v4h-4zM0 10h4v4H0zM20 10h4v4h-4zM3 6l3-3 3 3-3 3zM15 18l3-3 3 3-3 3zM3 18l3-3 3 3-3 3zM15 6l3-3 3 3-3 3z"/></g></svg>
        <span class="name">偏置曲线</span>
        <svg width="13" height="13" viewBox="0 0 14 14"><path d="M4 3a5.4 5.4 0 1 0 6 0" fill="none" stroke="#fff" stroke-width="1.7"/><path d="M1.5 1l5 .5-1 4.5z" fill="#fff"/></svg>
        <svg width="14" height="14" viewBox="0 0 14 14"><path d="M2 2l10 10M12 2L2 12" stroke="#fff" stroke-width="2"/></svg>
      </div>
      <div class="body">
        <section class="sec">
          ${this.secHead("偏置类型", true)}
          <div class="field">
            <svg width="14" height="12" viewBox="0 0 14 12" class="ic"><path d="M1 1v4M13 1v4M1 3h12" stroke="#1a2ab0"/><rect x=".5" y="6.5" width="13" height="5" fill="#f0d070" stroke="#555"/><path d="M3 7v2M5 7v2M7 7v2M9 7v2M11 7v2" stroke="#555"/></svg>
            <span class="v">距离</span><i class="caret"></i>
          </div>
        </section>
        <section class="sec">
          ${this.secHead("曲线")}
          <div class="pick">
            <div class="bar">
              <svg width="14" height="14" viewBox="0 0 14 14" class="ic"><path d="M1 7l4 4 8-9" fill="none" stroke="#25b050" stroke-width="3"/></svg>
              <span>选择曲线 (4)</span>
            </div>
            <div class="btn">
              <svg width="26" height="26" viewBox="0 0 26 26"><path d="M5 2v22M2 6h12M16 4v20" stroke="#1a2ab0" stroke-width="1" fill="none"/><path d="M3 7q14-1 20 17" fill="none" stroke="#d03020" stroke-width="1.6"/><ellipse cx="20" cy="18" rx="3.5" ry="5" fill="none" stroke="#1a2ab0" stroke-width="1.3"/></svg>
            </div>
          </div>
        </section>
        <section class="sec tail">
          ${this.secHead("偏置")}
          <div class="line"><span>距离</span>
            <div class="field w141"><span class="v" style="font-family:'DejaVu Sans',sans-serif">5</span><span class="unit">mm</span><i class="caret"></i></div>
          </div>
          <div class="line"><span>副本数</span><div class="num right">1</div></div>
          <div class="line"><span>反向</span>
            <div class="tiny"><svg width="18" height="18" viewBox="0 0 18 18"><rect x=".5" y=".5" width="17" height="17" fill="none" stroke="#555" stroke-dasharray="1 1"/><path d="M3 3l12 12" stroke="#111"/><path d="M16 2l-1 6-5-5zM2 16l1-6 5 5z" fill="#1a2ab0"/></svg></div>
          </div>
        </section>
        <section class="sec tail">
          ${this.secHead("设置")}
          ${check("关联")}
          <div style="height:2px"></div>
          <div class="line sel"><span>输入曲线</span>${sel("替换")}</div>
          <div class="line sel"><span>修剪</span>${sel("相切延伸")}</div>
          <div class="group">
            ${this.secHead("非关联设置")}
            <div class="line"><span>延伸因子</span><div class="num"><span>1.000</span></div></div>
            ${check("组对象")}
          </div>
          ${check("大致偏置")}
          <div style="height:2px"></div>
          ${check("高级曲线拟合")}
          <div style="height:2px"></div>
          <div class="line"><span>距离公差</span><div class="num"><span>0.025</span></div></div>
        </section>
        <section class="sec">
          ${this.secHead("预览")}
          <div class="line" style="height:32px">
            ${check("预览", true)}
            <div class="res"><span>显示结果</span>
              <div class="lens"><svg width="26" height="26" viewBox="0 0 26 26"><circle cx="10" cy="10" r="7.5" fill="#fff" stroke="#8a9ab0" stroke-width="1.5"/><path d="M16 16l7 7" stroke="#8a7a50" stroke-width="3"/></svg></div>
            </div>
          </div>
        </section>
      </div>
      <div class="foot">
        <div class="ok">&lt;  确定  &gt;</div><div>应用</div><div>取消</div>
      </div>
    </div>`;
  }

  render() {
    const arrow = (d: string) => html`<svg width="10" height="12" viewBox="0 0 10 12"><path d=${d} fill="none" stroke="#555" stroke-width="2"/></svg>`;
    return html`
      <div class="title"></div>
      ${this.renderMenu()}
      ${ROWS.map((r, i) => this.renderRow(r, i === 3 ? "last" : ""))}
      <div class="work">
        ${this.renderStrip()}
        <div class="tree">
          <div class="nav">
            <div class="treerow">
              <div class="node">
                <i class="dots"></i>
                <svg width="12" height="12" viewBox="0 0 12 12" class="ic"><rect x=".5" y=".5" width="11" height="11" fill="#fff" stroke="#111"/><path d="M2 5l3 3 5-6" fill="none" stroke="#20b040" stroke-width="2.4"/></svg>
                <svg width="14" height="12" viewBox="0 0 14 12" class="ic"><circle cx="4" cy="2" r="2.5" fill="#c02020"/><path d="M1 6l9-3 3 3-2 6H3z" fill="#3a70d0"/></svg>
                <span>体 (31)</span>
              </div>
              <div class="chev"><svg width="10" height="8" viewBox="0 0 10 8"><path d="M1 1l4 4 4-4" fill="none" stroke="#555" stroke-width="2"/></svg></div>
            </div>
            <div class="hbar">${arrow("M7 1L2 6l5 5")}<b></b>${arrow("M3 1l5 5-5 5")}</div>
          </div>
        </div>
        ${this.renderViewport()}
      </div>
      ${this.renderDialog()}
      <svg class="banner" width="160" height="160" viewBox="0 0 160 160">
        <path d="M5 5H155L5 155z" fill="#ff0000"/>
        <text transform="translate(14 70) rotate(-40)" font-family="Liberation Sans" font-size="25" fill="#111">9SUG</text>
        <text transform="translate(19 128) rotate(-44.5)" font-family="Liberation Sans, Noto Sans CJK SC, sans-serif" font-weight="700" font-size="22" fill="#fff">学UG就上UG网</text>
      </svg>
    `;
  }
}
